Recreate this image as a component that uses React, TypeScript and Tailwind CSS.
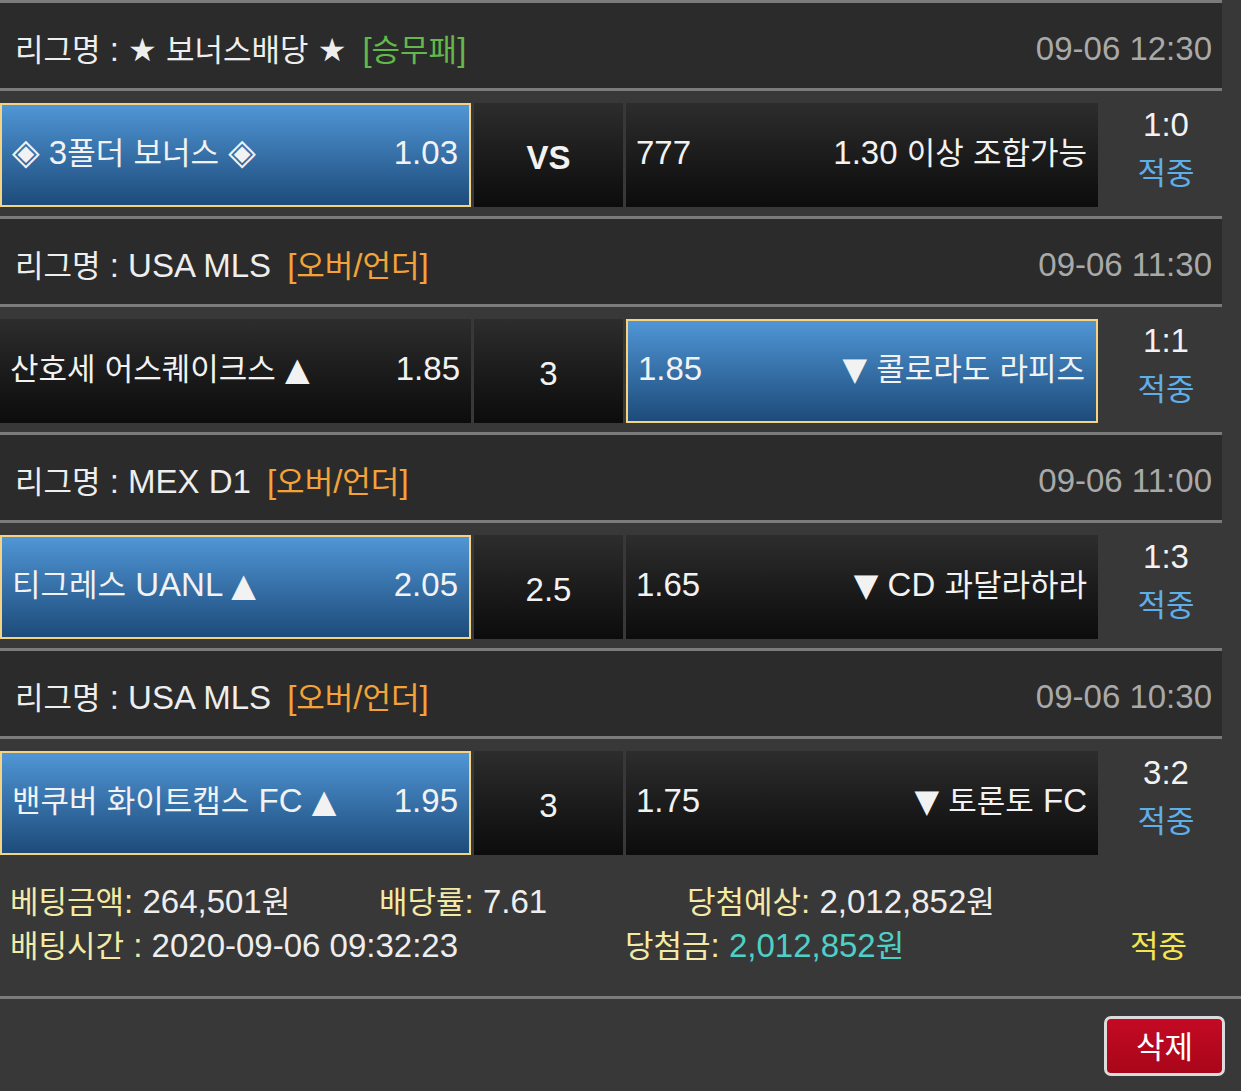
import React from "react";

function T({ s }: { s: string }) {
  const parts = s.split(/([\u3131-\uD7A3]+|[★▲▼]+|◈)/).filter((p) => p.length > 0);
  return (
    <>
      {parts.map((p, i) => {
        if (/[\u3131-\uD7A3]/.test(p)) {
          return (
            <span key={i} className="text-[31px] font-['Noto_Sans_CJK_KR',sans-serif]">
              {p}
            </span>
          );
        }
        if (p === "◈") {
          return (
            <span key={i} className="text-[36px] font-['DejaVu_Sans',sans-serif]">
              {p}
            </span>
          );
        }
        if (/[★▲▼]/.test(p)) {
          return (
            <span key={i} className="text-[32px] font-['DejaVu_Sans',sans-serif]">
              {p}
            </span>
          );
        }
        return <React.Fragment key={i}>{p}</React.Fragment>;
      })}
    </>
  );
}

type Cell = { left: string; right: string; active: boolean };
type Match = {
  league: string;
  tag: string;
  tagColor: string;
  date: string;
  home: Cell;
  mid: string;
  midBold?: boolean;
  away: Cell;
  score: string;
};

const matches: Match[] = [
  {
    league: "리그명 : ★ 보너스배당 ★",
    tag: "[승무패]",
    tagColor: "text-[#62b84a]",
    date: "09-06 12:30",
    home: { left: "◈ 3폴더 보너스 ◈", right: "1.03", active: true },
    mid: "VS",
    midBold: true,
    away: { left: "777", right: "1.30 이상 조합가능", active: false },
    score: "1:0",
  },
  {
    league: "리그명 : USA MLS",
    tag: "[오버/언더]",
    tagColor: "text-[#f3a33a]",
    date: "09-06 11:30",
    home: { left: "산호세 어스퀘이크스 ▲", right: "1.85", active: false },
    mid: "3",
    away: { left: "1.85", right: "▼ 콜로라도 라피즈", active: true },
    score: "1:1",
  },
  {
    league: "리그명 : MEX D1",
    tag: "[오버/언더]",
    tagColor: "text-[#f3a33a]",
    date: "09-06 11:00",
    home: { left: "티그레스 UANL ▲", right: "2.05", active: true },
    mid: "2.5",
    away: { left: "1.65", right: "▼ CD 과달라하라", active: false },
    score: "1:3",
  },
  {
    league: "리그명 : USA MLS",
    tag: "[오버/언더]",
    tagColor: "text-[#f3a33a]",
    date: "09-06 10:30",
    home: { left: "밴쿠버 화이트캡스 FC ▲", right: "1.95", active: true },
    mid: "3",
    away: { left: "1.75", right: "▼ 토론토 FC", active: false },
    score: "3:2",
  },
];

function OddCell({ cell, width }: { cell: Cell; width: string }) {
  const base =
    "flex items-center justify-between h-[104px] shrink-0 text-[#f2f2f2] pl-[10px] pr-[11px] pb-[6px] " +
    width;
  const skin = cell.active
    ? " border-2 border-[#f4d383] bg-gradient-to-b from-[#5096d6] to-[#1d4c7b]"
    : " bg-gradient-to-b from-[#2d2d2d] to-[#0c0c0c]";
  return (
    <div className={base + skin}>
      <span className="whitespace-nowrap">
        <T s={cell.left} />
      </span>
      <span className="whitespace-nowrap">
        <T s={cell.right} />
      </span>
    </div>
  );
}

function Line() {
  return <div className="h-[3px] bg-[#7b7b7b] w-[1222px]" />;
}

export default function App() {
  return (
    <div className="w-[1241px] min-h-[1091px] bg-[#383838] text-[33px] leading-none text-[#eeeeee] font-['Liberation_Sans','Noto_Sans_CJK_KR',sans-serif]">
      {matches.map((m, i) => (
        <div key={i}>
          <Line />
          <div className="w-[1222px] h-[85px] bg-[#2b2b2b] flex items-center justify-between pl-[15px] pr-[10px] pt-[6px]">
            <div className="flex items-center whitespace-nowrap">
              <span className="text-[#eeeeee]">
                <T s={m.league} />
              </span>
              <span className={"ml-[16px] " + m.tagColor}>
                <T s={m.tag} />
              </span>
            </div>
            <span className="text-[#a9a9a9]">{m.date}</span>
          </div>
          <Line />
          <div className="h-[125px] pt-[12px] flex">
            <div className="flex gap-[3px]">
              <OddCell cell={m.home} width="w-[471px]" />
              <div
                className={
                  "w-[149px] h-[104px] flex items-center justify-center pt-[4px] bg-gradient-to-b from-[#2d2d2d] to-[#0c0c0c] text-[#f2f2f2] " +
                  (m.midBold ? "font-bold" : "")
                }
              >
                {m.mid}
              </div>
              <OddCell cell={m.away} width="w-[472px]" />
            </div>
            <div className="w-[136px] h-[104px] flex flex-col items-center justify-center gap-[14px] pb-[13px]">
              <span className="text-[#f2f2f2]">{m.score}</span>
              <span className="text-[#5eaee8]">
                <T s="적중" />
              </span>
            </div>
          </div>
        </div>
      ))}
      <div className="pl-[10px] pt-[15px] pb-[29px] flex flex-col">
        <div className="flex h-[44px] items-center whitespace-nowrap">
          <div className="w-[369px]">
            <span className="text-[#f4eaa6]">
              <T s="베팅금액:" />
            </span>{" "}
            <span>
              <T s="264,501원" />
            </span>
          </div>
          <div className="w-[308px]">
            <span className="text-[#f4eaa6]">
              <T s="배당률:" />
            </span>{" "}
            <span>7.61</span>
          </div>
          <div>
            <span className="text-[#f4eaa6]">
              <T s="당첨예상:" />
            </span>{" "}
            <span>
              <T s="2,012,852원" />
            </span>
          </div>
        </div>
        <div className="flex h-[44px] items-center whitespace-nowrap">
          <div className="w-[615px]">
            <span className="text-[#f4eaa6]">
              <T s="배팅시간 :" />
            </span>{" "}
            <span>2020-09-06 09:32:23</span>
          </div>
          <div className="w-[505px]">
            <span className="text-[#f4eaa6]">
              <T s="당첨금:" />
            </span>{" "}
            <span className="text-[#4fd0c6]">
              <T s="2,012,852원" />
            </span>
          </div>
          <div className="text-[#f3e651]">
            <T s="적중" />
          </div>
        </div>
      </div>
      <div className="h-[3px] bg-[#7b7b7b]" />
      <div className="flex justify-end pt-[17px] pr-[16px] pb-[15px]">
        <button className="w-[121px] h-[60px] rounded-[7px] border-[3px] border-[#dcdcdc] bg-gradient-to-b from-[#c40a24] to-[#a8061a] text-[#ffffff] flex items-center justify-center pb-[3px]">
          <T s="삭제" />
        </button>
      </div>
    </div>
  );
}
